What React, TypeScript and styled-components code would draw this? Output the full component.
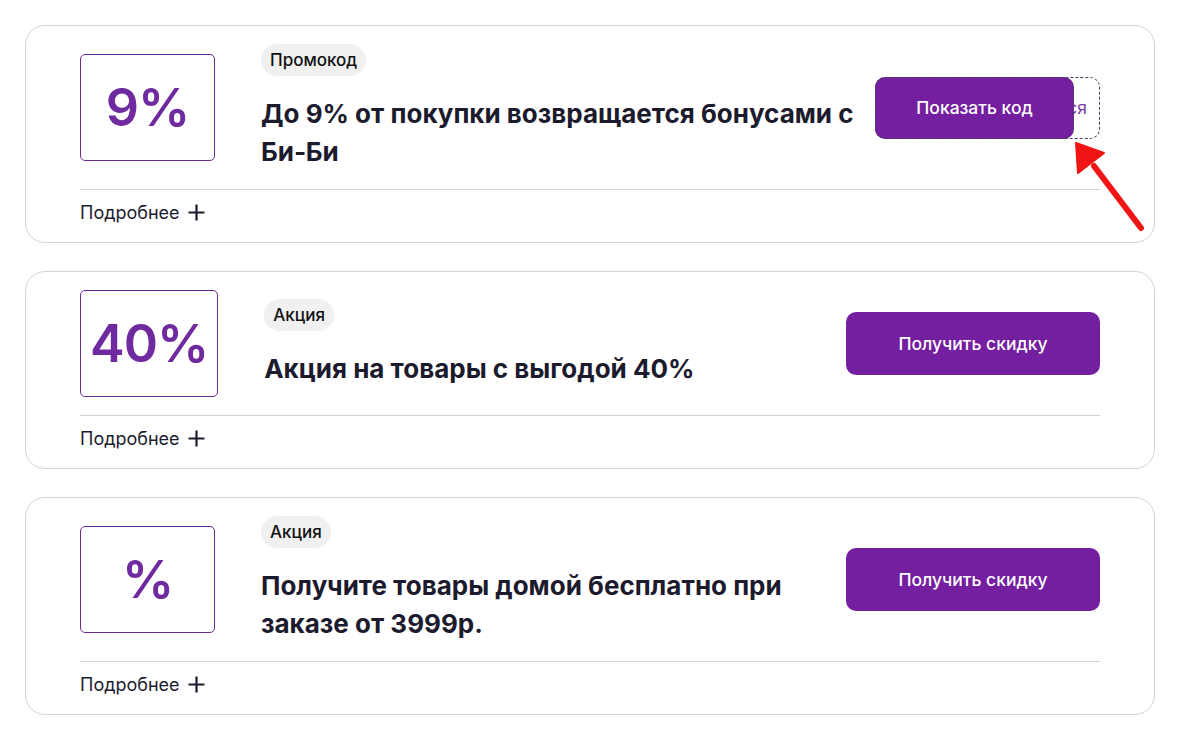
import React from 'react';
import styled, { createGlobalStyle } from 'styled-components';

const GlobalStyle = createGlobalStyle`
  html, body {
    margin: 0;
    padding: 0;
    background: #ffffff;
    font-family: Inter, "Noto Sans", "Liberation Sans", sans-serif;
    color: #1c1b2e;
  }
`;

const Page = styled.div`
  display: flex;
  flex-direction: column;
  gap: 28px;
  padding: 25px 38px 25px 25px;
`;

const Card = styled.div`
  position: relative;
  border: 1px solid #d4d4d4;
  border-radius: 20px;
  padding: 18px 54px 0 54px;
  background: #fff;
`;

const Row = styled.div`
  display: flex;
  align-items: center;
  padding-bottom: 18px;
  border-bottom: 1px solid #d0d0d0;
`;

const PercentBox = styled.div`
  flex: none;
  min-width: 135px;
  height: 107px;
  box-sizing: border-box;
  padding: 0 9px;
  border: 1px solid #6c2a94;
  border-radius: 5px;
  display: flex;
  align-items: center;
  justify-content: center;
  color: #6f2a9f;
  font-size: 52px;
  font-weight: 600;
  letter-spacing: -1px;
`;

const Info = styled.div`
  flex: 1;
  min-width: 0;
  margin-left: 46px;
  display: flex;
  flex-direction: column;
  align-items: flex-start;
`;

const Tag = styled.span`
  background: #f0f0f0;
  border-radius: 16px;
  height: 32px;
  line-height: 32px;
  padding: 0 9px;
  font-size: 17px;
  font-weight: 500;
  color: #111;
`;

const Title = styled.div`
  margin-top: 19px;
  font-size: 26px;
  line-height: 38px;
  font-weight: 700;
  color: #1c1b2e;
`;

const Action = styled.div`
  flex: none;
  margin-left: 16px;
`;

const Button = styled.button`
  width: 254px;
  height: 63px;
  border: none;
  border-radius: 10px;
  background: #741ea0;
  color: #fff;
  font-family: inherit;
  font-size: 17.5px;
  font-weight: 500;
  cursor: pointer;
`;

const CodeBox = styled.div`
  position: relative;
  width: 225px;
  height: 62px;
  box-sizing: border-box;
  border: 1px dashed #4d3d5e;
  border-radius: 10px;
  display: flex;
  align-items: center;
  justify-content: flex-end;
  padding-right: 12px;
  color: #7a3ea3;
  font-size: 17.5px;
`;

const RevealButton = styled.button`
  position: absolute;
  left: -1px;
  top: -1px;
  width: 199px;
  height: 62px;
  border: 1px dashed #4d3d5e;
  border-radius: 10px;
  background: #741ea0;
  color: #fff;
  font-family: inherit;
  font-size: 17.5px;
  font-weight: 500;
  cursor: pointer;
`;

const Footer = styled.div`
  display: flex;
  align-items: center;
  gap: 8px;
  height: 22px;
  padding: 11px 0 19px;
  font-size: 18px;
  color: #1c1b2e;
`;

const Arrow = styled.svg`
  position: absolute;
  left: 1040px;
  top: 110px;
  pointer-events: none;
`;

type Offer = {
  value: string;
  tag: string;
  title: string;
  code?: string;
};

const offers: Offer[] = [
  { value: '9%', tag: 'Промокод', title: 'До 9% от покупки возвращается бонусами с Би\u2011Би', code: 'Активируется' },
  { value: '40%', tag: 'Акция', title: 'Акция на товары с выгодой 40%' },
  { value: '%', tag: 'Акция', title: 'Получите товары домой бесплатно при заказе от 3999р.' },
];

function PlusIcon() {
  return (
    <svg width="17" height="17" viewBox="0 0 17 17">
      <path d="M8.5 0.5v16M0.5 8.5h16" stroke="#1c1b2e" strokeWidth="2.2" />
    </svg>
  );
}

function OfferCard({ offer }: { offer: Offer }) {
  return (
    <Card>
      <Row>
        <PercentBox>{offer.value}</PercentBox>
        <Info>
          <Tag>{offer.tag}</Tag>
          <Title>{offer.title}</Title>
        </Info>
        <Action>
          {offer.code ? (
            <CodeBox>
              {offer.code}
              <RevealButton>Показать код</RevealButton>
            </CodeBox>
          ) : (
            <Button>Получить скидку</Button>
          )}
        </Action>
      </Row>
      <Footer>
        Подробнее <PlusIcon />
      </Footer>
      {offer.code && (
        <Arrow width="90" height="100" viewBox="0 0 90 100">
          <path d="M75 92 L28 30" stroke="#f11414" strokeWidth="6" strokeLinecap="round" />
          <path d="M10 7 L12 37 L38 17 Z" fill="#f11414" stroke="#f11414" strokeWidth="2" strokeLinejoin="round" />
        </Arrow>
      )}
    </Card>
  );
}

export default function App() {
  return (
    <>
      <GlobalStyle />
      <Page>
        {offers.map((o, i) => (
          <OfferCard key={i} offer={o} />
        ))}
      </Page>
    </>
  );
}
